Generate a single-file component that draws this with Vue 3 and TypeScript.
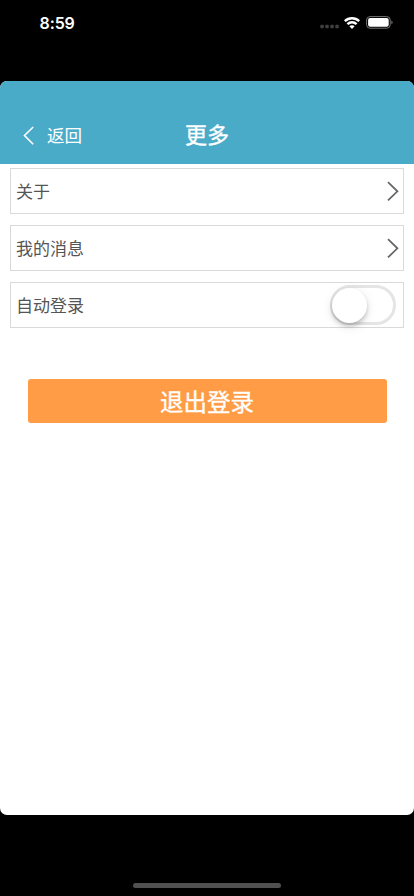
<script setup lang="ts">
import { ref } from 'vue'

interface MenuItem {
  id: string
  label: string
}

const items: MenuItem[] = [
  { id: 'about', label: '关于' },
  { id: 'messages', label: '我的消息' },
]

const autoLogin = ref<boolean>(false)
</script>

<template>
  <div class="screen">
    <div class="status">
      <span class="time">8:59</span>
      <div class="indicators">
        <svg class="dots" width="20" height="5" viewBox="0 0 20 5" fill="#404042">
          <rect x="0.3" y="0.8" width="3.5" height="3.5" rx="1" />
          <rect x="5.3" y="0.8" width="3.5" height="3.5" rx="1" />
          <rect x="10.3" y="0.8" width="3.5" height="3.5" rx="1" />
          <rect x="15.3" y="0.8" width="3.5" height="3.5" rx="1" />
        </svg>
        <svg class="wifi" width="16" height="12" viewBox="0 0 16 12" fill="none" stroke="#fff" stroke-width="2.3">
          <path d="M.8 4.1C4.8.3 11.2.3 15.2 4.1" />
          <path d="M3.4 7.1C6 4.6 10 4.6 12.6 7.1" />
          <path d="M5.4 9.3C6.9 7.9 9.1 7.9 10.6 9.3L8 12Z" fill="#fff" stroke="none" />
        </svg>
        <svg class="battery" width="27" height="13" viewBox="0 0 27 13">
          <rect x="0.6" y="0.6" width="23.6" height="11.6" rx="3.4" fill="none" stroke="#747474" stroke-width="1" />
          <rect x="2.1" y="2.1" width="20.6" height="8.6" rx="2" fill="#fff" />
          <path d="M25.4 4.6Q26.6 5.2 26.6 6.4T25.4 8.2Z" fill="#747474" />
        </svg>
      </div>
    </div>

    <main class="sheet">
      <header class="header">
        <button class="back" type="button">
          <svg width="12" height="20" viewBox="0 0 12 20" fill="none" stroke="#fff" stroke-width="1.6">
            <path d="M10.2 1L1.5 9.5L10.2 18.2" />
          </svg>
          <span>返回</span>
        </button>
        <h1 class="title">更多</h1>
      </header>

      <div class="list">
        <div v-for="item in items" :key="item.id" class="row">
          <span class="label">{{ item.label }}</span>
          <svg class="chevron" width="12" height="20" viewBox="0 0 12 20" fill="none" stroke="#686868" stroke-width="1.8">
            <path d="M1 1.2L10.4 10.3L1 19.4" />
          </svg>
        </div>
        <div class="row">
          <span class="label">自动登录</span>
          <button
            class="switch"
            :class="{ on: autoLogin }"
            type="button"
            role="switch"
            :aria-checked="autoLogin"
            @click="autoLogin = !autoLogin"
          >
            <i class="knob"></i>
          </button>
        </div>
      </div>

      <button class="logout" type="button">退出登录</button>
    </main>

    <div class="home-bar"></div>
  </div>
</template>

<style>
body {
  margin: 0;
  background: #000;
}
</style>

<style scoped>
.screen {
  box-sizing: border-box;
  width: 414px;
  height: 896px;
  display: flex;
  flex-direction: column;
  align-items: center;
  overflow: hidden;
  background: #000;
  font-family: "Liberation Sans", "Noto Sans CJK SC", sans-serif;
}

button {
  margin: 0;
  padding: 0;
  border: 0;
  background: none;
  font-family: inherit;
}

.status {
  box-sizing: border-box;
  width: 100%;
  height: 81px;
  flex: none;
  display: flex;
  justify-content: space-between;
  align-items: flex-start;
  padding: 13px 21px 0 39.5px;
}

.time {
  color: #fff;
  font: 600 16px/20px Inter, sans-serif;
  letter-spacing: -0.1px;
}

.indicators {
  display: flex;
  align-items: flex-start;
  padding-top: 3px;
}

.dots {
  margin: 8px 4px 0 0;
}

.wifi {
  margin: 1px 6px 0 0;
}

.sheet {
  width: 100%;
  height: 734px;
  flex: none;
  border-radius: 7px;
  overflow: hidden;
  background: #fff;
}

.header {
  box-sizing: border-box;
  height: 82.5px;
  padding: 27px 23px 0;
  display: grid;
  grid-template-columns: 1fr auto 1fr;
  align-items: center;
  background: #4aabc9;
  color: #fff;
}

.back {
  display: flex;
  align-items: center;
  gap: 12px;
  color: #fff;
  font-size: 17.5px;
  line-height: 26px;
}

.title {
  margin: 0;
  font-size: 22px;
  font-weight: 400;
  line-height: 32px;
  -webkit-text-stroke: 0.35px #fff;
}

.list {
  display: flex;
  flex-direction: column;
  gap: 11px;
  padding: 4.5px 10px 0;
}

.row {
  box-sizing: border-box;
  height: 46px;
  padding: 0 4px 0 5px;
  display: flex;
  justify-content: space-between;
  align-items: center;
  border: 1px solid #d9d9d9;
  color: #555;
  font-size: 17px;
  line-height: 26px;
}

.label {
  padding-top: 3px;
}

.switch {
  box-sizing: border-box;
  width: 66px;
  height: 40px;
  margin-right: 3px;
  display: flex;
  align-items: center;
  border: 3px solid #e5e5e5;
  border-radius: 20px;
  background: #fff;
}

.switch.on {
  justify-content: flex-end;
  background: #4aabc9;
}

.knob {
  width: 35px;
  height: 35px;
  flex: none;
  margin-left: -1px;
  border-radius: 50%;
  background: #fff;
  box-shadow: 0 3px 4px rgba(0, 0, 0, 0.2), 0 3px 12px rgba(0, 0, 0, 0.1);
}

.logout {
  display: block;
  box-sizing: border-box;
  width: 359px;
  height: 44px;
  margin: 51px auto 0;
  padding-top: 3px;
  border-radius: 3px;
  background: #ff9c45;
  color: #fff;
  font-size: 23.5px;
  font-weight: 400;
  line-height: 42px;
  -webkit-text-stroke: 0.35px #fff;
}

.home-bar {
  width: 148px;
  height: 5px;
  flex: none;
  margin-top: 67.6px;
  border-radius: 3px;
  background: #505050;
}
</style>
